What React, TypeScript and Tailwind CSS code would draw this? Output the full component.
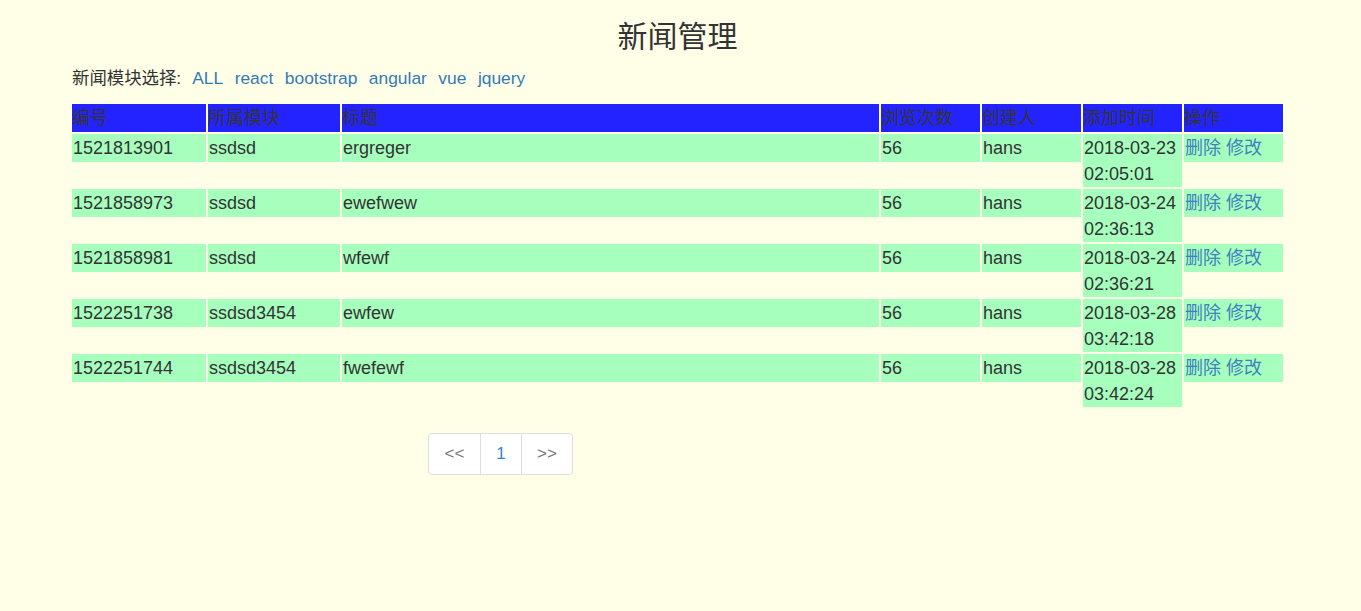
import React from "react";

const rows = [
  ["1521813901", "ssdsd", "ergreger", "56", "hans", "2018-03-23 02:05:01"],
  ["1521858973", "ssdsd", "ewefwew", "56", "hans", "2018-03-24 02:36:13"],
  ["1521858981", "ssdsd", "wfewf", "56", "hans", "2018-03-24 02:36:21"],
  ["1522251738", "ssdsd3454", "ewfew", "56", "hans", "2018-03-28 03:42:18"],
  ["1522251744", "ssdsd3454", "fwefewf", "56", "hans", "2018-03-28 03:42:24"],
];

const widths = ["w-[134px]", "w-[132px]", "w-[537px]", "w-[99px]", "w-[99px]", "w-[99px]", "w-[99px]"];
const headers = ["编号", "所属模块", "标题", "浏览次数", "创建人", "添加时间", "操作"];

export default function App() {
  return (
    <div
      className="min-h-[611px] w-full bg-[#ffffe8] text-[#333] text-[18px] leading-[25.5px]"
      style={{ fontFamily: '"Liberation Sans", Arial, "Noto Sans CJK SC", sans-serif' }}
    >
      <div className="ml-[72px] w-[1211px] pt-[20px]">
        <div className="h-[33px] text-center text-[30px] leading-[33px]">新闻管理</div>
        <div className="mt-[12px] flex h-[26px] items-center text-[17.4px] leading-[26px]">
          <span className="mr-[11px]">新闻模块选择:</span>
          <div className="flex gap-[11.5px] text-[#337ab7]">
            <a>ALL</a>
            <a>react</a>
            <a>bootstrap</a>
            <a>angular</a>
            <a>vue</a>
            <a>jquery</a>
          </div>
        </div>
        <div className="mt-[13px] flex flex-col gap-[2px]">
          <div className="flex items-start gap-[2px]">
            {headers.map((h, i) => (
              <div key={i} className={`${widths[i]} h-[28px] bg-[#2323ff] leading-[28px]`}>
                {h}
              </div>
            ))}
          </div>
          {rows.map((r, ri) => (
            <div key={ri} className="flex items-start gap-[2px]">
              {r.map((c, ci) => (
                <div key={ci} className={`${widths[ci]} bg-[#a7ffbe] pt-[2px] pl-[1px]`}>
                  {c}
                </div>
              ))}
              <div className={`${widths[6]} bg-[#a7ffbe] pt-[2px] pl-[1px] text-[#3f80c0]`}>
                删除 修改
              </div>
            </div>
          ))}
        </div>
        <div className="mt-[26px] ml-[356px] flex h-[42px] w-[145px] rounded-[4px] border border-[#ddd] bg-white text-[17px]">
          <div className="flex w-[51px] items-center justify-center text-[#777]">&lt;&lt;</div>
          <div className="flex w-[41px] items-center justify-center border-l border-[#ddd] text-[#2f88d0]">1</div>
          <div className="flex w-[51px] items-center justify-center border-l border-[#ddd] text-[#777]">&gt;&gt;</div>
        </div>
      </div>
    </div>
  );
}
